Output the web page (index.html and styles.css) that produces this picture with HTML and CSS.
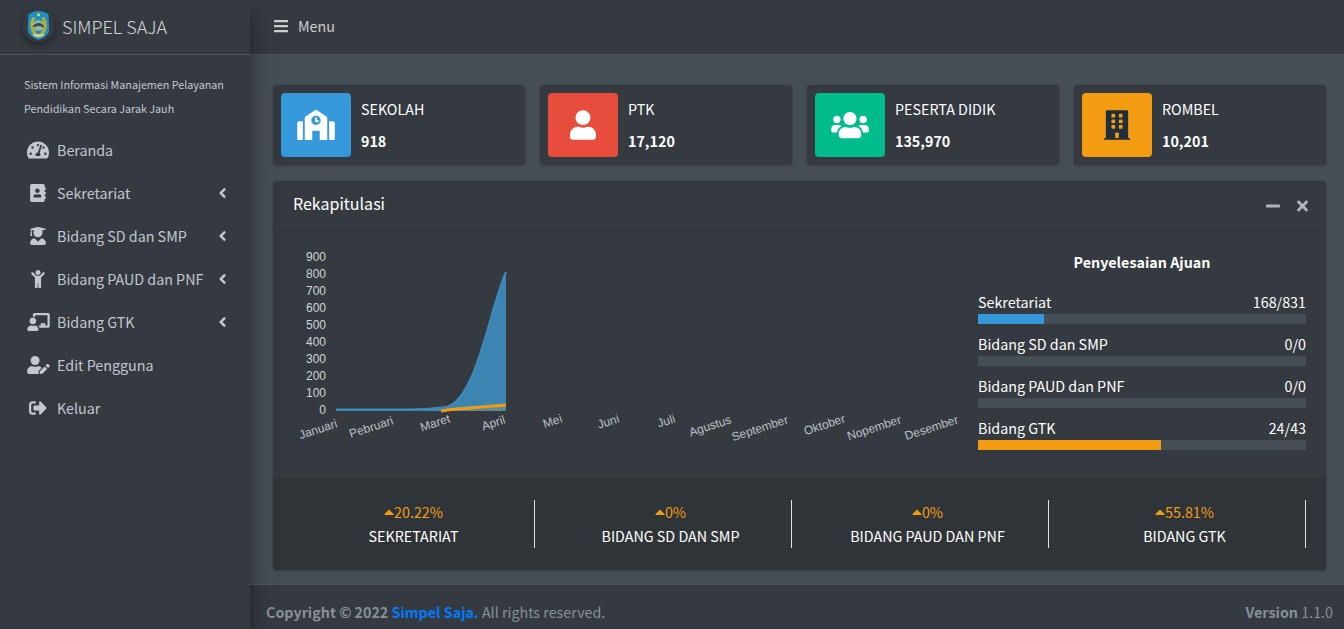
FILE: index.html
```html
<!DOCTYPE html>
<html lang="id">
<head>
<meta charset="utf-8">
<title>Simpel Saja</title>
<link rel="stylesheet" href="styles.css">
</head>
<body>
<aside class="sidebar">
  <div class="brand">
    <span class="logo">
      <svg viewBox="0 0 30 40" width="23" height="31">
        <path d="M2 5 Q15 -3 28 5 L29 25 Q29 34 15 39 Q1 34 1 25Z" fill="#1e8fc8"/>
        <path d="M7 9 Q1 22 8 31 L13 31 Q6 22 11 10Z" fill="#b8ae30"/>
        <path d="M23 9 Q29 22 22 31 L17 31 Q24 22 19 10Z" fill="#b8ae30"/>
        <ellipse cx="15" cy="20" rx="7" ry="7" fill="#9ab8a8"/>
        <path d="M8 20 Q15 13 22 20 L22 23 Q15 18 8 23Z" fill="#36504e"/>
        <circle cx="15" cy="6" r="2" fill="#e8d84a"/>
        <path d="M7 31 L23 31 L21 34 Q15 37 9 34Z" fill="#d8cc80"/>
      </svg>
    </span>
    <span class="brand-text">SIMPEL SAJA</span>
  </div>
  <nav class="nav">
    <p class="nav-note">Sistem Informasi Manajemen Pelayanan</p>
    <p class="nav-note last">Pendidikan Secara Jarak Jauh</p>
    <a class="nav-item"><span class="nav-icon"><svg viewBox="0 0 576 512" width="22" height="20"><path d="M288 32C128.94 32 0 160.94 0 320c0 52.8 14.25 102.26 39.06 144.8 5.61 9.62 16.3 15.2 27.44 15.2h443c11.14 0 21.83-5.58 27.44-15.2C561.75 422.26 576 372.8 576 320c0-159.06-128.94-288-288-288zm0 64c14.71 0 26.58 10.13 30.32 23.65-1.11 2.26-2.64 4.23-3.45 6.67l-9.22 27.67c-5.13 3.49-10.97 6.01-17.64 6.01-17.67 0-32-14.33-32-32S270.33 96 288 96zM96 384c-17.67 0-32-14.33-32-32s14.33-32 32-32 32 14.33 32 32-14.33 32-32 32zm48-160c-17.67 0-32-14.33-32-32s14.33-32 32-32 32 14.33 32 32-14.33 32-32 32zm246.77-72.41l-61.33 184C343.13 347.33 352 364.54 352 384c0 11.72-3.38 22.55-8.88 32H232.88c-5.5-9.45-8.88-20.28-8.88-32 0-33.94 26.5-61.43 59.9-63.59l61.34-184.01c4.17-12.56 17.73-19.45 30.36-15.17 12.57 4.19 19.35 17.79 15.17 30.36zm14.66 57.2l15.52-46.55c3.47-1.29 7.13-2.23 11.05-2.23 17.67 0 32 14.33 32 32s-14.33 32-32 32c-11.38-.01-20.89-6.28-26.57-15.22zM480 384c-17.67 0-32-14.33-32-32s14.33-32 32-32 32 14.33 32 32-14.33 32-32 32z"/></svg></span><span class="nav-label">Beranda</span></a>
    <a class="nav-item"><span class="nav-icon"><svg viewBox="0 0 448 512" width="16" height="18"><path d="M436 160c6.6 0 12-5.4 12-12v-40c0-6.6-5.4-12-12-12h-20V48c0-26.5-21.5-48-48-48H48C21.5 0 0 21.5 0 48v416c0 26.5 21.5 48 48 48h320c26.5 0 48-21.5 48-48v-48h20c6.6 0 12-5.4 12-12v-40c0-6.6-5.4-12-12-12h-20v-64h20c6.6 0 12-5.4 12-12v-40c0-6.6-5.4-12-12-12h-20v-64h20zm-228-32c35.3 0 64 28.7 64 64s-28.7 64-64 64-64-28.7-64-64 28.7-64 64-64zm112 236.8c0 10.6-10 19.2-22.4 19.2H118.4C106 384 96 375.4 96 364.8v-19.2c0-31.8 30.1-57.6 67.2-57.6h5c12.3 5.1 25.7 8 39.8 8s27.6-2.9 39.8-8h5c37.1 0 67.2 25.8 67.2 57.6v19.2z"/></svg></span><span class="nav-label">Sekretariat</span><svg class="chev" viewBox="0 0 256 512" width="9" height="16"><path d="M31.7 239l136-136c9.4-9.4 24.6-9.4 33.9 0l22.6 22.6c9.4 9.4 9.4 24.6 0 33.9L127.9 256l96.4 96.4c9.4 9.4 9.4 24.6 0 33.9L201.7 409c-9.4 9.4-24.6 9.4-33.9 0l-136-136c-9.5-9.4-9.5-24.6-.1-34z"/></svg></a>
    <a class="nav-item"><span class="nav-icon"><svg viewBox="0 0 448 512" width="16" height="18"><path d="M319.4 320.6L224 416l-95.4-95.4C57.1 323.7 0 382.2 0 454.4v9.6c0 26.5 21.5 48 48 48h352c26.5 0 48-21.5 48-48v-9.6c0-72.2-57.1-130.7-128.6-133.8zM13.6 79.8l6.4 1.5v58.4c-7 4.2-12 11.5-12 20.3 0 8.4 4.6 15.4 11.1 19.7L3.5 242c-1.7 6.9 2.1 14 7.6 14h41.8c5.5 0 9.3-7.1 7.6-14l-15.6-62.3C51.4 175.4 56 168.4 56 160c0-8.8-5-16.1-12-20.3V87.1l66 15.9c-8.6 17.2-14 36.4-14 57 0 70.7 57.3 128 128 128s128-57.3 128-128c0-20.6-5.3-39.8-14-57l96.3-23.2c18.2-4.4 18.2-27.1 0-31.5l-190.4-46c-13-3.1-26.7-3.1-39.7 0L13.6 48.2c-18.1 4.4-18.1 27.2 0 31.6z"/></svg></span><span class="nav-label">Bidang SD dan SMP</span><svg class="chev" viewBox="0 0 256 512" width="9" height="16"><path d="M31.7 239l136-136c9.4-9.4 24.6-9.4 33.9 0l22.6 22.6c9.4 9.4 9.4 24.6 0 33.9L127.9 256l96.4 96.4c9.4 9.4 9.4 24.6 0 33.9L201.7 409c-9.4 9.4-24.6 9.4-33.9 0l-136-136c-9.5-9.4-9.5-24.6-.1-34z"/></svg></a>
    <a class="nav-item"><span class="nav-icon"><svg viewBox="0 0 384 512" width="14" height="18"><path d="M120 72c0-39.765 32.235-72 72-72s72 32.235 72 72c0 39.764-32.235 72-72 72s-72-32.236-72-72zm254.627 1.373c-12.496-12.497-32.758-12.497-45.254 0L242.745 160H141.254L54.627 73.373c-12.496-12.497-32.758-12.497-45.254 0-12.497 12.497-12.497 32.758 0 45.254L104 213.254V480c0 17.673 14.327 32 32 32h16c17.673 0 32-14.327 32-32V368h16v112c0 17.673 14.327 32 32 32h16c17.673 0 32-14.327 32-32V213.254l94.627-94.627c12.497-12.497 12.497-32.757 0-45.254z"/></svg></span><span class="nav-label">Bidang PAUD dan PNF</span><svg class="chev" viewBox="0 0 256 512" width="9" height="16"><path d="M31.7 239l136-136c9.4-9.4 24.6-9.4 33.9 0l22.6 22.6c9.4 9.4 9.4 24.6 0 33.9L127.9 256l96.4 96.4c9.4 9.4 9.4 24.6 0 33.9L201.7 409c-9.4 9.4-24.6 9.4-33.9 0l-136-136c-9.5-9.4-9.5-24.6-.1-34z"/></svg></a>
    <a class="nav-item"><span class="nav-icon"><svg viewBox="0 0 640 512" width="23" height="18"><path d="M208 352c-2.39 0-4.78.35-7.06 1.09C187.98 357.3 174.35 360 160 360c-14.35 0-27.98-2.7-40.95-6.91-2.28-.74-4.66-1.09-7.05-1.09C49.94 352-.33 402.48 0 464.62.14 490.88 21.73 512 48 512h224c26.27 0 47.86-21.12 48-47.38.33-62.14-49.94-112.62-112-112.62zm-48-32c53.02 0 96-42.98 96-96s-42.98-96-96-96-96 42.98-96 96 42.98 96 96 96zM592 0H208c-26.47 0-48 22.25-48 49.59V96c23.42 0 45.1 6.78 64 17.8V64h352v288h-64v-64H384v64h-76.24c19.1 16.69 33.12 38.73 39.69 64H592c26.47 0 48-22.25 48-49.59V49.59C640 22.25 618.47 0 592 0z"/></svg></span><span class="nav-label">Bidang GTK</span><svg class="chev" viewBox="0 0 256 512" width="9" height="16"><path d="M31.7 239l136-136c9.4-9.4 24.6-9.4 33.9 0l22.6 22.6c9.4 9.4 9.4 24.6 0 33.9L127.9 256l96.4 96.4c9.4 9.4 9.4 24.6 0 33.9L201.7 409c-9.4 9.4-24.6 9.4-33.9 0l-136-136c-9.5-9.4-9.5-24.6-.1-34z"/></svg></a>
    <a class="nav-item"><span class="nav-icon"><svg viewBox="0 0 640 512" width="23" height="18"><path d="M224 256c70.7 0 128-57.3 128-128S294.7 0 224 0 96 57.3 96 128s57.3 128 128 128zm89.6 32h-16.7c-22.2 10.2-46.9 16-72.9 16s-50.6-5.8-72.9-16h-16.7C60.2 288 0 348.2 0 422.4V464c0 26.5 21.5 48 48 48h274.9c-2.4-6.8-3.4-14-2.6-21.3l6.8-60.9 1.2-11.1 7.9-7.9 77.3-77.3c-24.5-27.7-60-45.5-99.9-45.5zm45.3 145.3l-6.8 61c-1.1 10.2 7.5 18.8 17.6 17.6l60.9-6.8 137.9-137.9-71.7-71.7-137.9 137.8zM633 268.9L595.1 231c-9.3-9.3-24.5-9.3-33.8 0l-37.8 37.8-4.1 4.1 71.8 71.7 41.8-41.8c9.3-9.4 9.3-24.5 0-33.9z"/></svg></span><span class="nav-label">Edit Pengguna</span></a>
    <a class="nav-item"><span class="nav-icon"><svg viewBox="0 0 512 512" width="18" height="18"><path d="M497 273L329 441c-15 15-41 4.5-41-17v-96H152c-13.3 0-24-10.7-24-24v-96c0-13.3 10.7-24 24-24h136V88c0-21.4 25.9-32 41-17l168 168c9.3 9.4 9.3 24.6 0 34zM192 436v-40c0-6.6-5.4-12-12-12H96c-17.7 0-32-14.3-32-32V160c0-17.7 14.3-32 32-32h84c6.6 0 12-5.4 12-12V76c0-6.6-5.4-12-12-12H96c-53 0-96 43-96 96v192c0 53 43 96 96 96h84c6.6 0 12-5.4 12-12z"/></svg></span><span class="nav-label">Keluar</span></a>
  </nav>
</aside>
<div class="main">
  <header class="topbar">
    <svg viewBox="0 0 448 512" width="14" height="16"><path d="M16 132h416c8.837 0 16-7.163 16-16V76c0-8.837-7.163-16-16-16H16C7.163 60 0 67.163 0 76v40c0 8.837 7.163 16 16 16zm0 160h416c8.837 0 16-7.163 16-16v-40c0-8.837-7.163-16-16-16H16c-8.837 0-16 7.163-16 16v40c0 8.837 7.163 16 16 16zm0 160h416c8.837 0 16-7.163 16-16v-40c0-8.837-7.163-16-16-16H16c-8.837 0-16 7.163-16 16v40c0 8.837 7.163 16 16 16z"/></svg>
    <span>Menu</span>
  </header>
  <main class="content">
    <section class="stats">
      <div class="stat"><div class="stat-icon blue"><svg viewBox="0 0 640 512" width="38" height="30"><path d="M0 224v272c0 8.84 7.16 16 16 16h80V192H32c-17.67 0-32 14.33-32 32zm360-48h-24v-40c0-4.42-3.58-8-8-8h-16c-4.42 0-8 3.58-8 8v64c0 4.42 3.58 8 8 8h48c4.42 0 8-3.58 8-8v-16c0-4.42-3.58-8-8-8zm137.75-63.96l-160-106.67a32.006 32.006 0 0 0-35.5 0l-160 106.67A32.02 32.02 0 0 0 128 138.66V512h128V368c0-8.84 7.16-16 16-16h96c8.84 0 16 7.16 16 16v144h128V138.67c0-10.7-5.35-20.7-14.25-26.63zM320 256c-44.18 0-80-35.82-80-80s35.82-80 80-80 80 35.82 80 80-35.82 80-80 80zm288-64h-64v320h80c8.84 0 16-7.16 16-16V224c0-17.67-14.33-32-32-32z"/></svg></div><div class="stat-text"><span>SEKOLAH</span><b>918</b></div></div>
      <div class="stat"><div class="stat-icon red"><svg viewBox="0 0 448 512" width="26" height="30"><path d="M224 256c70.7 0 128-57.3 128-128S294.7 0 224 0 96 57.3 96 128s57.3 128 128 128zm89.6 32h-16.7c-22.2 10.2-46.9 16-72.9 16s-50.6-5.8-72.9-16h-16.7C60.2 288 0 348.2 0 422.4V464c0 26.5 21.5 48 48 48h352c26.5 0 48-21.5 48-48v-41.6c0-74.2-60.2-134.4-134.4-134.4z"/></svg></div><div class="stat-text"><span>PTK</span><b>17,120</b></div></div>
      <div class="stat"><div class="stat-icon green"><svg viewBox="0 0 640 512" width="38" height="30"><path d="M96 224c35.3 0 64-28.7 64-64s-28.7-64-64-64-64 28.7-64 64 28.7 64 64 64zm448 0c35.3 0 64-28.7 64-64s-28.7-64-64-64-64 28.7-64 64 28.7 64 64 64zm32 32h-64c-17.6 0-33.5 7.1-45.1 18.6 40.3 22.1 68.9 62 75.1 109.4h66c17.7 0 32-14.3 32-32v-32c0-35.3-28.7-64-64-64zm-256 0c61.9 0 112-50.1 112-112S381.9 32 320 32 208 82.1 208 144s50.1 112 112 112zm76.8 32h-8.3c-20.8 10-43.9 16-68.5 16s-47.6-6-68.5-16h-8.3C179.6 288 128 339.6 128 403.2V432c0 26.5 21.5 48 48 48h288c26.5 0 48-21.5 48-48v-28.8c0-63.6-51.6-115.2-115.2-115.2zm-223.7-13.4C161.5 263.1 145.6 256 128 256H64c-35.3 0-64 28.7-64 64v32c0 17.7 14.3 32 32 32h65.9c6.3-47.4 34.9-87.3 75.2-109.4z"/></svg></div><div class="stat-text"><span>PESERTA DIDIK</span><b>135,970</b></div></div>
      <div class="stat"><div class="stat-icon orange"><svg viewBox="0 0 448 512" width="26" height="30"><path d="M436 480h-20V24c0-13.255-10.745-24-24-24H56C42.745 0 32 10.745 32 24v456H12c-6.627 0-12 5.373-12 12v20h448v-20c0-6.627-5.373-12-12-12zM128 76c0-6.627 5.373-12 12-12h40c6.627 0 12 5.373 12 12v40c0 6.627-5.373 12-12 12h-40c-6.627 0-12-5.373-12-12V76zm0 96c0-6.627 5.373-12 12-12h40c6.627 0 12 5.373 12 12v40c0 6.627-5.373 12-12 12h-40c-6.627 0-12-5.373-12-12v-40zm52 148h-40c-6.627 0-12-5.373-12-12v-40c0-6.627 5.373-12 12-12h40c6.627 0 12 5.373 12 12v40c0 6.627-5.373 12-12 12zm76 160h-64v-84c0-6.627 5.373-12 12-12h40c6.627 0 12 5.373 12 12v84zm64-172c0 6.627-5.373 12-12 12h-40c-6.627 0-12-5.373-12-12v-40c0-6.627 5.373-12 12-12h40c6.627 0 12 5.373 12 12v40zm0-96c0 6.627-5.373 12-12 12h-40c-6.627 0-12-5.373-12-12v-40c0-6.627 5.373-12 12-12h40c6.627 0 12 5.373 12 12v40zm0-96c0 6.627-5.373 12-12 12h-40c-6.627 0-12-5.373-12-12V76c0-6.627 5.373-12 12-12h40c6.627 0 12 5.373 12 12v40z"/></svg></div><div class="stat-text"><span>ROMBEL</span><b>10,201</b></div></div>
    </section>
    <section class="card">
      <div class="card-head">
        <h3>Rekapitulasi</h3>
        <svg viewBox="0 0 448 512" width="14" height="16"><path d="M416 208H32c-17.67 0-32 14.33-32 32v32c0 17.67 14.33 32 32 32h384c17.67 0 32-14.33 32-32v-32c0-17.67-14.33-32-32-32z"/></svg>
        <svg viewBox="0 0 352 512" width="11" height="16"><path d="M242.72 256l100.07-100.07c12.28-12.28 12.28-32.19 0-44.48l-22.24-22.24c-12.28-12.28-32.19-12.28-44.48 0L176 189.28 75.93 89.21c-12.28-12.28-32.19-12.28-44.48 0L9.21 111.45c-12.28 12.28-12.28 32.19 0 44.48L109.28 256 9.21 356.07c-12.28 12.28-12.28 32.19 0 44.48l22.24 22.24c12.28 12.28 32.2 12.28 44.48 0L176 322.72l100.07 100.07c12.28 12.28 32.2 12.28 44.48 0l22.24-22.24c12.28-12.28 12.28-32.19 0-44.48L242.72 256z"/></svg>
      </div>
      <div class="card-body">
        <svg class="chart" viewBox="0 0 705 215" width="705" height="215">
          <g class="y-axis">
            <text x="53" y="30">900</text><text x="53" y="47">800</text><text x="53" y="64">700</text><text x="53" y="81">600</text><text x="53" y="98">500</text><text x="53" y="115">400</text><text x="53" y="132">300</text><text x="53" y="149">200</text><text x="53" y="166">100</text><text x="53" y="183">0</text>
          </g>
          <path d="M63 178 L130 178 C150 178 165 177.5 175 175.5 C183 173 190 165 199 145 C212 115 222 66 233 41 L233 180 L63 180Z" fill="#3c85b3"/>
          <path d="M63 178.5 L130 178.5 C150 178.5 165 177.5 175 175.5 C183 173 190 165 199 145 C212 115 222 66 233 41" fill="none" stroke="#3b8bba" stroke-width="2"/>
          <path d="M168 180 L178 178.6 L233 174 L233 180Z" fill="#5d8a94"/>
          <path d="M168 180 L178 178.6 L233 174" fill="none" stroke="#f39c12" stroke-width="3"/>
          <g class="x-axis">
            <text transform="translate(65 196) rotate(-18)">Januari</text>
            <text transform="translate(121 193) rotate(-18)">Pebruari</text>
            <text transform="translate(178 191) rotate(-18)">Maret</text>
            <text transform="translate(233 192) rotate(-18)">April</text>
            <text transform="translate(290 191) rotate(-18)">Mei</text>
            <text transform="translate(347 191) rotate(-18)">Juni</text>
            <text transform="translate(403 191) rotate(-18)">Juli</text>
            <text transform="translate(459 192) rotate(-18)">Agustus</text>
            <text transform="translate(516 192) rotate(-18)">September</text>
            <text transform="translate(573 191) rotate(-18)">Oktober</text>
            <text transform="translate(629 192) rotate(-18)">Nopember</text>
            <text transform="translate(686 192) rotate(-18)">Desember</text>
          </g>
        </svg>
        <div class="progress-panel">
          <p class="progress-title">Penyelesaian Ajuan</p>
          <div class="progress-row"><div class="progress-label"><span>Sekretariat</span><span>168/831</span></div><div class="track"><div class="fill blue" style="width:20.22%"></div></div></div>
          <div class="progress-row"><div class="progress-label"><span>Bidang SD dan SMP</span><span>0/0</span></div><div class="track"></div></div>
          <div class="progress-row"><div class="progress-label"><span>Bidang PAUD dan PNF</span><span>0/0</span></div><div class="track"></div></div>
          <div class="progress-row"><div class="progress-label"><span>Bidang GTK</span><span>24/43</span></div><div class="track"><div class="fill orange" style="width:55.81%"></div></div></div>
        </div>
      </div>
      <div class="card-foot">
        <div class="desc"><span class="pct"><svg viewBox="0 64 320 384" width="10" height="12"><path d="M288.662 352H31.338c-17.818 0-26.741-21.543-14.142-34.142l128.662-128.662c7.81-7.81 20.474-7.81 28.284 0l128.662 128.662c12.6 12.599 3.676 34.142-14.142 34.142z"/></svg>20.22%</span><span class="desc-name">SEKRETARIAT</span></div>
        <div class="desc"><span class="pct"><svg viewBox="0 64 320 384" width="10" height="12"><path d="M288.662 352H31.338c-17.818 0-26.741-21.543-14.142-34.142l128.662-128.662c7.81-7.81 20.474-7.81 28.284 0l128.662 128.662c12.6 12.599 3.676 34.142-14.142 34.142z"/></svg>0%</span><span class="desc-name">BIDANG SD DAN SMP</span></div>
        <div class="desc"><span class="pct"><svg viewBox="0 64 320 384" width="10" height="12"><path d="M288.662 352H31.338c-17.818 0-26.741-21.543-14.142-34.142l128.662-128.662c7.81-7.81 20.474-7.81 28.284 0l128.662 128.662c12.6 12.599 3.676 34.142-14.142 34.142z"/></svg>0%</span><span class="desc-name">BIDANG PAUD DAN PNF</span></div>
        <div class="desc"><span class="pct"><svg viewBox="0 64 320 384" width="10" height="12"><path d="M288.662 352H31.338c-17.818 0-26.741-21.543-14.142-34.142l128.662-128.662c7.81-7.81 20.474-7.81 28.284 0l128.662 128.662c12.6 12.599 3.676 34.142-14.142 34.142z"/></svg>55.81%</span><span class="desc-name">BIDANG GTK</span></div>
      </div>
    </section>
  </main>
  <footer class="footer">
    <div><b>Copyright © 2022 <a class="footer-link">Simpel Saja.</a></b> All rights reserved.</div>
    <div><b>Version</b> 1.1.0</div>
  </footer>
</div>
</body>
</html>
```

FILE: styles.css
```css
* { box-sizing: border-box; }
html, body { height: 100%; }
body {
  margin: 0;
  display: flex;
  height: 629px;
  overflow: hidden;
  background: #454d55;
  color: #fff;
  font-family: "Noto Sans CJK SC", "Noto Sans", sans-serif;
  font-size: 14.3px;
  line-height: 1.5;
}
.sidebar {
  width: 250px;
  flex: none;
  background: #343a40;
  box-shadow: 0 14px 28px rgba(0,0,0,.25), 0 10px 10px rgba(0,0,0,.22);
  z-index: 2;
}
.brand {
  height: 55px;
  display: flex;
  align-items: center;
  padding-left: 22px;
  border-bottom: 1px solid #4b545c;
}
.logo {
  width: 33px;
  height: 33px;
  border-radius: 50%;
  display: flex;
  align-items: center;
  justify-content: center;
  margin-right: 7px;
  margin-top: -4px;
  box-shadow: 0 3px 6px rgba(0,0,0,.16), 0 3px 6px rgba(0,0,0,.23);
}
.brand-text {
  font-size: 18px;
  font-weight: 300;
  margin-top: -2px;
  color: rgba(255,255,255,.8);
}
.nav { padding-top: 18px; }
.nav-note {
  margin: 0;
  height: 24px;
  line-height: 24px;
  padding-left: 24px;
  font-size: 10.75px;
  color: #c2c7d0;
}
.nav-note.last { margin-bottom: 7px; }
.nav-item {
  height: 43px;
  display: flex;
  align-items: center;
  color: #c2c7d0;
  fill: #c2c7d0;
  padding-right: 23px;
}
.nav-icon {
  width: 57px;
  padding-left: 26px;
  flex: none;
  display: flex;
  justify-content: center;
  padding-right: 7px;
}
.nav-label { flex: 1; }
.chev { flex: none; }
.main {
  flex: 1;
  min-width: 0;
  display: flex;
  flex-direction: column;
}
.topbar {
  height: 55px;
  flex: none;
  display: flex;
  align-items: center;
  gap: 10px;
  padding-left: 24px;
  padding-bottom: 3px;
  background: #343a40;
  border-bottom: 1px solid #4b545c;
  color: rgba(255,255,255,.75);
  fill: rgba(255,255,255,.75);
}
.content {
  flex: 1;
  padding: 30px 18px 0 23px;
  min-height: 0;
}
.stats {
  display: grid;
  grid-template-columns: repeat(4, 252px);
  gap: 15px;
}
.stat {
  height: 80px;
  padding: 8px;
  display: flex;
  background: #343a40;
  border-radius: 4px;
  box-shadow: 0 0 1px rgba(0,0,0,.125), 0 1px 3px rgba(0,0,0,.2);
}
.stat-icon {
  width: 70px;
  flex: none;
  display: flex;
  align-items: center;
  justify-content: center;
  border-radius: 4px;
  fill: #fff;
}
.stat-icon.blue { background: #3498db; }
.stat-icon.red { background: #e74c3c; }
.stat-icon.green { background: #00bc8c; }
.stat-icon.orange { background: #f39c12; fill: #1f2d3d; }
.stat-text {
  display: flex;
  flex-direction: column;
  padding-left: 10px;
  line-height: 24px;
  gap: 8px;
  padding-top: 4px;
}
.card {
  margin-top: 16px;
  height: 389px;
  display: flex;
  flex-direction: column;
  background: #343a40;
  border-radius: 4px;
  box-shadow: 0 0 1px rgba(0,0,0,.125), 0 1px 3px rgba(0,0,0,.2);
}
.card-head {
  height: 50px;
  flex: none;
  display: flex;
  align-items: center;
  gap: 17px;
  padding: 0 18px 0 20px;
  border-bottom: 1px solid rgba(0,0,0,.125);
  fill: #adb5bd;
}
.card-head h3 {
  margin: -5px auto 0 0;
  font-size: 16px;
  font-weight: 400;
}
.card-body {
  flex: 1;
  display: flex;
  min-height: 0;
}
.chart { flex: none; }
.y-axis text {
  font: 12px "Liberation Sans", sans-serif;
  fill: #ced4da;
  text-anchor: end;
}
.x-axis text {
  font: 12px "Liberation Sans", sans-serif;
  fill: #bcc2c8;
  text-anchor: end;
}
.progress-panel {
  width: 328px;
  padding-top: 20px;
}
.progress-title {
  margin: 0 0 18px;
  text-align: center;
  font-weight: 700;
  line-height: 21px;
}
.progress-row { height: 42px; }
.progress-label {
  display: flex;
  justify-content: space-between;
  height: 24px;
  line-height: 24px;
}
.track {
  height: 10px;
  background: #454d55;
}
.fill { height: 100%; }
.fill.blue { background: #3498db; }
.fill.orange { background: #f39c12; }
.card-foot {
  height: 92px;
  flex: none;
  display: grid;
  grid-template-columns: repeat(4, 257px);
  padding: 22px 0 0 5px;
  background: #2f3438;
  border-radius: 0 0 4px 4px;
}
.desc {
  height: 48px;
  padding-left: 15px;
  display: flex;
  flex-direction: column;
  align-items: center;
  border-right: 1px solid #dee2e6;
}
.pct {
  color: #f39c12;
  line-height: 24px;
  fill: #f39c12;
  display: flex;
  align-items: center;
}
.pct svg { flex: none; }
.desc-name { line-height: 24px; }
.footer {
  height: 45px;
  flex: none;
  display: flex;
  justify-content: space-between;
  align-items: center;
  padding: 10px 11px 0 16px;
  background: #343a40;
  border-top: 1px solid #4b545c;
  color: #869099;
}
.footer-link { color: #007bff; }
```
